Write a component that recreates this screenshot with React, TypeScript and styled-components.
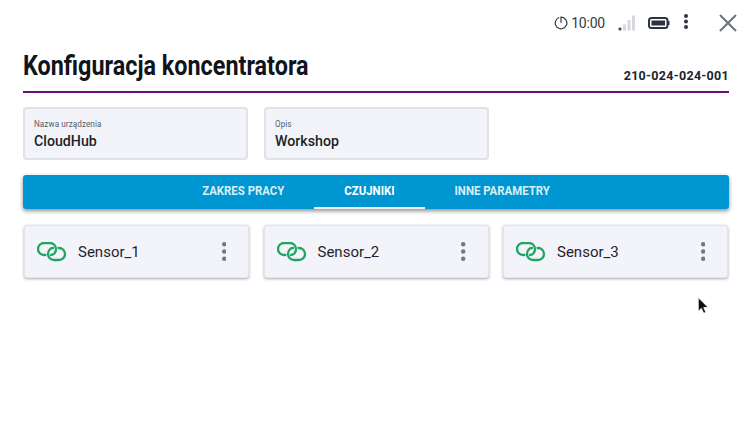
import styled, { createGlobalStyle } from "styled-components";

const GlobalStyle = createGlobalStyle`
  html, body {
    margin: 0;
    padding: 0;
    background: #fff;
    font-family: Roboto, "Liberation Sans", sans-serif;
    overflow: hidden;
  }
`;

const Page = styled.div`
  position: relative;
  width: 750px;
  height: 432px;
  box-sizing: border-box;
  padding: 0 21px 0 23px;
`;

const StatusBar = styled.div`
  display: flex;
  align-items: center;
  justify-content: flex-end;
  height: 46px;
  color: #333a45;
  margin-right: -8px;
`;

const Clock = styled.div`
  display: flex;
  align-items: center;
  gap: 3px;
  font-size: 14px;
  letter-spacing: -0.2px;
  margin-right: 13px;
`;

const StatusIcon = styled.svg<{ $gap: number }>`
  display: block;
  margin-right: ${(p) => p.$gap}px;
`;

const Header = styled.div`
  display: flex;
  align-items: flex-end;
  justify-content: space-between;
  height: 40px;
  border-bottom: 2px solid #6f0a7f;
  padding-bottom: 5px;
  box-sizing: content-box;
`;

const Title = styled.h1`
  margin: 0 0 2px;
  font-size: 27.5px;
  line-height: 36px;
  font-weight: 700;
  color: #10141c;
  transform: scaleX(0.85);
  transform-origin: left center;
  white-space: nowrap;
`;

const SerialNumber = styled.span`
  font-size: 12.5px;
  font-weight: 700;
  color: #20242c;
  letter-spacing: 0.3px;
  margin-bottom: 3px;
`;

const FieldRow = styled.div`
  display: flex;
  gap: 16px;
  margin-top: 14px;
`;

const Field = styled.div`
  width: 225px;
  height: 53px;
  box-sizing: border-box;
  padding: 10px 9px 0;
  background: #f3f4f9;
  border: 2px solid #e0e2e8;
  border-radius: 4px;
`;

const FieldLabel = styled.div`
  font-size: 9px;
  line-height: 11px;
  color: #555b66;
  letter-spacing: 0.1px;
  transform: scaleX(0.9);
  transform-origin: left center;
`;

const FieldValue = styled.div`
  margin-top: 3px;
  font-size: 14.2px;
  line-height: 17px;
  font-weight: 500;
  color: #1b1f27;
`;

const TabBar = styled.div`
  display: flex;
  justify-content: center;
  height: 34px;
  margin-top: 15px;
  padding-right: 1px;
  background: #0096d1;
  border-radius: 3px;
  box-shadow: 0 2px 4px rgba(0, 0, 0, 0.45);
`;

const Tab = styled.div<{ $active?: boolean; $width: number }>`
  display: flex;
  align-items: center;
  justify-content: center;
  width: ${(p) => p.$width}px;
  height: 34px;
  box-sizing: border-box;
  font-size: 12px;
  font-weight: 700;
  color: ${(p) => (p.$active ? "#ffffff" : "#d8eef8")};
  white-space: nowrap;
  border-bottom: 2px solid ${(p) => (p.$active ? "#eef1f3" : "transparent")};

  span {
    display: inline-block;
    transform: scaleX(0.95);
  }
`;

const SensorRow = styled.div`
  display: flex;
  justify-content: space-between;
  margin-top: 16px;
  padding: 0 1px;
`;

const SensorCard = styled.div`
  display: flex;
  align-items: center;
  width: 225px;
  height: 53px;
  box-sizing: border-box;
  padding: 0 22px 0 12px;
  background: #f3f4f9;
  border: 1px solid #e2e4ea;
  border-radius: 3px;
  box-shadow: 0 1px 3px rgba(40, 44, 70, 0.4);
`;

const SensorName = styled.span`
  flex: 1;
  margin-left: 11px;
  font-size: 15px;
  color: #1f232b;
`;

const Cursor = styled.svg`
  position: absolute;
  left: 697px;
  top: 297px;
`;

const LinkIcon = () => (
  <svg width="30" height="20" viewBox="0 0 30 20" fill="none" stroke="#1fa463" strokeWidth="2.300" strokeLinecap="round">
    <path d="M8.500 13H7A6 6 0 0 1 7 1H13A6 6 0 0 1 19 7C19 10 17 13 14 13" />
    <path d="M16 6C13 6 11 9 11 12A6 6 0 0 0 17 18H22A6 6 0 0 0 22 6H21.500" />
  </svg>
);

const Dots = ({ color, size, height }: { color: string; size: number; height: number }) => (
  <svg width={size * 2} height={height} viewBox={`0 0 ${size * 2} ${height}`} fill={color}>
    <circle cx={size} cy={size} r={size} />
    <circle cx={size} cy={height / 2} r={size} />
    <circle cx={size} cy={height - size} r={size} />
  </svg>
);

const sensors = ["Sensor_1", "Sensor_2", "Sensor_3"];

export default function App() {
  return (
    <Page>
      <GlobalStyle />
      <StatusBar>
        <Clock>
          <svg width="14" height="14" viewBox="0 0 14 14" fill="none" stroke="#333a45" strokeWidth="1.2">
            <path d="M5.200 1.500A5.800 5.800 0 1 0 7 1.200V6.800" />
          </svg>
          10:00
        </Clock>
        <StatusIcon $gap={12} width="18" height="16" viewBox="0 0 18 16">
          <rect x="0.500" y="12.500" width="3" height="3" rx="1" fill="#4a505a" />
          <rect x="5" y="9.500" width="3" height="6" fill="#d5d8dc" />
          <rect x="9.500" y="5" width="3" height="10.500" fill="#d5d8dc" />
          <rect x="14" y="0.500" width="3" height="15" fill="#d5d8dc" />
        </StatusIcon>
        <StatusIcon $gap={14} width="22" height="12" viewBox="0 0 22 12">
          <rect x="1" y="1" width="18.500" height="10" rx="2.500" fill="none" stroke="#2d3440" strokeWidth="2" />
          <rect x="3.500" y="3.500" width="13.500" height="5" fill="#2d3440" />
          <rect x="20" y="4" width="1.500" height="4" fill="#2d3440" />
        </StatusIcon>
        <StatusIcon $gap={31} as="div">
          <Dots color="#2d3440" size={2} height={15} />
        </StatusIcon>
        <svg width="18" height="18" viewBox="0 0 18 18" stroke="#6f7680" strokeWidth="2.200">
          <path d="M1 1 17 17M17 1 1 17" />
        </svg>
      </StatusBar>

      <Header>
        <Title>Konfiguracja koncentratora</Title>
        <SerialNumber>210-024-024-001</SerialNumber>
      </Header>

      <FieldRow>
        <Field>
          <FieldLabel>Nazwa urządzenia</FieldLabel>
          <FieldValue>CloudHub</FieldValue>
        </Field>
        <Field>
          <FieldLabel>Opis</FieldLabel>
          <FieldValue>Workshop</FieldValue>
        </Field>
      </FieldRow>

      <TabBar>
        <Tab $width={142}><span>ZAKRES PRACY</span></Tab>
        <Tab $width={111} $active><span>CZUJNIKI</span></Tab>
        <Tab $width={154}><span>INNE PARAMETRY</span></Tab>
      </TabBar>

      <SensorRow>
        {sensors.map((name) => (
          <SensorCard key={name}>
            <LinkIcon />
            <SensorName>{name}</SensorName>
            <Dots color="#73777f" size={2.200} height={19} />
          </SensorCard>
        ))}
      </SensorRow>

      <Cursor width="13" height="19" viewBox="0 0 12 18">
        <path d="M1 0.500V13.500L4 10.800 6.200 15.500 8.300 14.500 6.200 10H10.500Z" fill="#111" stroke="#fff" strokeWidth="0.800" />
      </Cursor>
    </Page>
  );
}
